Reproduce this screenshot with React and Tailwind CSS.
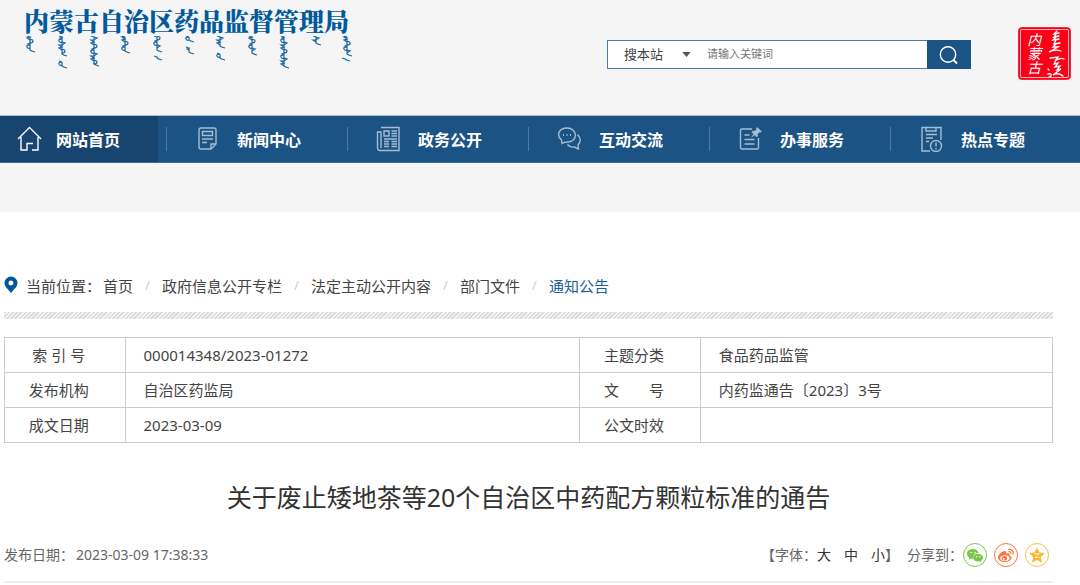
import React from "react";

const navItems = [
  { label: "新闻中心", icon: "news" },
  { label: "政务公开", icon: "paper" },
  { label: "互动交流", icon: "chat" },
  { label: "办事服务", icon: "service" },
  { label: "热点专题", icon: "topic" },
];

const crumbs = ["首页", "政府信息公开专栏", "法定主动公开内容", "部门文件"];

const iconPaths = {
  home: (
    <path d="M1 13 12.500 1.500 24 13M4 11v13h6v-6.500h6M15 24h6V11" />
  ),
  news: (
    <>
      <path d="M6 2h13q2 0 2 2v14l-5 5H6q-2 0-2-2V4q0-2 2-2Z" />
      <path d="M7.500 5.500h10v4h-10ZM7 13h11M7 16.500h5M16 23v-5h5" />
    </>
  ),
  paper: (
    <>
      <path d="M5 1.500h18v23H4q-2.500 0-2.500-3V6H5v16" />
      <path d="M8 5h5v5H8ZM15.500 5H21M15.500 7.500H21M15.500 10H21M8 13h13M8 15.500h5M15.500 15.500H21M8 18h5M15.500 18H21M8 20.500h5M15.500 20.500H21" />
    </>
  ),
  chat: (
    <>
      <path d="M5 17.500 4.500 14C-1 9 2 2 10 2c11 0 11 14 1 14-2 0-4 0-6 1.500ZM20.500 8.500c4 4 3 8 .5 10.500l.5 4-4-2c-3 .5-5.500-.5-7-2.500" />
      <path d="M6 9h1M9.500 9h1M13 9h1" strokeWidth="2" />
    </>
  ),
  service: (
    <>
      <path d="M14 3H4Q2.500 3 2.500 4.500v17Q2.500 23 4 23h15q1.500 0 1.500-1.500V12M6.500 9h5M6.500 13.500h10M6.500 18h10" />
      <path
        d="m19.500 1.500 4 4-1 .8-1-.3-2 2 .2 2-1 1-2-2-3 2 2-3-2-2 1-1 2 .2 2-2-.3-1Z"
        fill="currentColor"
        strokeWidth="0.500"
      />
    </>
  ),
  topic: (
    <>
      <path d="M11 25H3V1.500h19V14M7 2v3h10V2M7 8.500h11M7 12h7M7 15.500h3" />
      <circle cx="17" cy="20" r="5.500" />
      <path d="M17 16.500v4M17 22v1.500" strokeWidth="1.500" />
    </>
  ),
};

function NavIcon({ name, className }) {
  return (
    <svg
      viewBox="0 0 26 26"
      className={className}
      fill="none"
      stroke="currentColor"
      strokeWidth="1.400"
      aria-hidden="true"
    >
      {iconPaths[name]}
    </svg>
  );
}

// Vertical script below the site name: [x, top, bottom] for each word.
const strokes = [
  [6, 0, 16],
  [38, 0, 20],
  [38, 25, 32],
  [70, 0, 30],
  [101, 0, 17],
  [133, 0, 16],
  [133, 20, 24],
  [165, 0, 6],
  [165, 11, 18],
  [196, 0, 12],
  [196, 17, 24],
  [228, 0, 19],
  [260, 0, 32],
  [292, 0, 9],
  [323, 0, 20],
  [321, 22, 25],
];

const segments = [
  "l-3 1 3 2",
  "q3-1 3 1t-3 2",
  "l-2 1 2 1",
  "q-4 0-3 2t3 1",
  "l3 1-3 2",
  "l-3 0 3 2",
];
const segmentHeights = [3, 3, 2, 3, 3, 2];

function word(x, top, bottom) {
  let d = `M${x - 3} ${top}l3 1`;
  let y = top + 1;
  let i = (x + top) % segments.length;
  while (y < bottom - 4) {
    d += segments[i];
    y += segmentHeights[i];
    i = (i + 1) % segments.length;
  }
  return `${d}L${x} ${bottom - 2}q1 1 5 2M${x} ${top + 1}V${bottom - 2}`;
}

function ScriptLine() {
  return (
    <svg
      viewBox="0 0 332 34"
      className="h-[34px] w-[332px]"
      fill="none"
      stroke="#1c69a3"
      strokeWidth="1.200"
      aria-hidden="true"
    >
      {strokes.map(([x, top, bottom]) => (
        <path key={`${x}-${top}`} d={word(x, top, bottom)} />
      ))}
    </svg>
  );
}

function Seal() {
  return (
    <div className="flex h-[53px] w-[53px] items-center justify-around rounded-sm border border-[#fb2338] bg-[#fd0018] p-px text-white outline-1 -outline-offset-3 outline-[#ffb4bb]">
      <span className="pl-1 text-[14px] leading-none italic [writing-mode:vertical-rl]">
        内蒙古
      </span>
      <svg
        viewBox="0 0 22 50"
        className="h-[50px] w-[22px]"
        fill="none"
        stroke="currentColor"
        strokeWidth="1.300"
        strokeLinecap="round"
        aria-hidden="true"
      >
        <path d="M12 2 9 5l5-1M11 5l-2 3 5-1M11 8l-3 3 6-1M11 11l-2 4 6-1M11 15l-3 3 5 0-9 5q6-3 12-1M5 29l8-1-3 4q5-4 9-2M11 31l-2 4 4-1-3 4 5-1-3 4 4-1-8 6q5-3 10 1M3 40l1 1M3 45q4-1 3 2l-2 1" />
      </svg>
    </div>
  );
}

function SearchForm() {
  return (
    <form
      className="flex h-[29px] w-[364px] border border-[#4a7ca8] bg-white"
      onSubmit={(e) => e.preventDefault()}
    >
      <div className="relative w-[99px]">
        <select
          aria-label="搜索范围"
          className="h-full w-full appearance-none bg-transparent pl-4 text-[13px] text-[#444] outline-none"
        >
          <option>搜本站</option>
        </select>
        <svg
          viewBox="0 0 10 6"
          className="pointer-events-none absolute top-[11px] right-4 h-[5px] w-[9px] fill-[#555]"
          aria-hidden="true"
        >
          <path d="M0 0h10L5 6Z" />
        </svg>
      </div>
      <input
        type="text"
        aria-label="关键词"
        placeholder="请输入关键词"
        className="min-w-0 flex-1 bg-transparent text-[11px] outline-none placeholder:text-[#757575]"
      />
      <button
        type="submit"
        aria-label="搜索"
        className="-my-px -mr-px flex w-11 items-center justify-center bg-[#1b5384] text-white"
      >
        <svg
          viewBox="0 0 20 20"
          className="h-5 w-5"
          fill="none"
          stroke="currentColor"
          strokeWidth="1.400"
          aria-hidden="true"
        >
          <circle cx="9" cy="9.500" r="7.700" />
          <path d="m14.500 15 3.500 3.500" strokeWidth="1.800" />
        </svg>
      </button>
    </form>
  );
}

function Th({ children }) {
  return (
    <th
      scope="row"
      className="border border-[#ccc] pr-3 text-center font-normal whitespace-pre"
    >
      {children}
    </th>
  );
}

function Td({ children }) {
  return <td className="border border-[#ccc] pl-[18px]">{children}</td>;
}

function ShareLink({ label, className, children }) {
  return (
    <a
      href="#"
      aria-label={label}
      className={`flex h-6 w-6 items-center justify-center rounded-full border ${className}`}
    >
      <svg viewBox="0 0 16 16" className="h-4 w-4" aria-hidden="true">
        {children}
      </svg>
    </a>
  );
}

export default function App() {
  return (
    <div className="bg-white font-['Noto_Sans','Noto_Sans_CJK_SC',sans-serif] text-[#444]">
      <header className="bg-[#f5f5f5] pb-[49px]">
        <div className="flex h-[115px] items-start justify-between pr-[9px] pl-6">
          <a href="#" className="block pt-1 text-[#005a9c]">
            <h1 className="font-['Noto_Serif_CJK_SC','Noto_Sans_CJK_SC',serif] text-[25px] leading-8 font-black whitespace-nowrap">
              内蒙古自治区药品监督管理局
            </h1>
            <ScriptLine />
          </a>
          <div className="flex items-start gap-[47px] pt-[27px]">
            <div className="pt-[13px]">
              <SearchForm />
            </div>
            <Seal />
          </div>
        </div>
        <nav className="border-t border-b border-t-[#a9c0d3] border-b-[#3a6c98] bg-[#1b5384]">
          <ul className="flex h-[46px] items-center text-[16px] font-bold whitespace-nowrap text-white">
            <li className="h-full w-[166px]">
              <a
                href="#"
                className="flex h-full w-[158px] items-center bg-[#18456f] pl-[17px]"
              >
                <NavIcon name="home" className="mr-[13px] h-[26px] w-[26px]" />
                <span className="pt-0.5">网站首页</span>
              </a>
            </li>
            {navItems.map((item) => (
              <li
                key={item.label}
                className="h-6 w-[181px] border-l border-[#4f7ca3]"
              >
                <a href="#" className="flex h-full items-center pl-7">
                  <NavIcon
                    name={item.icon}
                    className="mr-4 h-[26px] w-[26px] text-[#a5bdd2]"
                  />
                  <span className="pt-0.5">{item.label}</span>
                </a>
              </li>
            ))}
          </ul>
        </nav>
      </header>

      <main className="pr-[27px] pl-1">
        <nav
          aria-label="当前位置"
          className="flex h-[100px] items-end pb-3 text-[15px] leading-7 whitespace-nowrap"
        >
          <svg
            viewBox="0 0 14 18"
            className="mr-2 mb-[6px] h-[18px] w-[14px]"
            aria-hidden="true"
          >
            <path
              fillRule="evenodd"
              fill="#00569b"
              d="M7 .5a6.500 6.500 0 0 1 6.500 6.500c0 4-4 6.500-6.500 10C4.500 13.500.5 11 .5 7A6.500 6.500 0 0 1 7 .5Zm0 4a2.500 2.500 0 1 0 0 5 2.500 2.500 0 0 0 0-5Z"
            />
          </svg>
          <span className="mr-0.5">当前位置：</span>
          <ol className="flex">
            {crumbs.map((c) => (
              <li key={c} className="flex">
                <a href="#">{c}</a>
                <span className="w-[29px] text-center text-xs leading-7 text-[#ccc]">
                  /
                </span>
              </li>
            ))}
            <li>
              <a href="#" className="text-[#1b5f9a]">
                通知公告
              </a>
            </li>
          </ol>
        </nav>

        <div className="h-[7px] bg-[repeating-linear-gradient(135deg,#d8d8d8_0_1px,#f6f6f6_2px_3px)]" />

        <table className="mt-[18px] w-full table-fixed border-collapse text-[15px]">
          <colgroup>
            <col className="w-[11.5%]" />
            <col className="w-[43.4%]" />
            <col className="w-[11.5%]" />
            <col />
          </colgroup>
          <tbody>
            <tr className="h-[35px]">
              <Th>索 引 号</Th>
              <Td>000014348/2023-01272</Td>
              <Th>主题分类</Th>
              <Td>食品药品监管</Td>
            </tr>
            <tr className="h-[35px]">
              <Th>发布机构</Th>
              <Td>自治区药监局</Td>
              <Th>文　　号</Th>
              <Td>内药监通告〔2023〕3号</Td>
            </tr>
            <tr className="h-[35px]">
              <Th>成文日期</Th>
              <Td>2023-03-09</Td>
              <Th>公文时效</Th>
              <Td />
            </tr>
          </tbody>
        </table>

        <h2 className="mt-9 text-center text-[25px] leading-9 text-[#333]">
          关于废止矮地茶等20个自治区中药配方颗粒标准的通告
        </h2>

        <div className="mt-7 flex items-center justify-between border-b-2 border-[#eee] pr-1 pb-[14px] text-sm leading-6 text-[#666]">
          <p className="flex gap-0.5">
            <span>发布日期：</span>
            <time>2023-03-09 17:38:33</time>
          </p>
          <div className="flex items-center">
            <span>【字体：</span>
            <span className="flex gap-[13px] text-[#333]">
              <button type="button">大</button>
              <button type="button">中</button>
              <button type="button">小</button>
            </span>
            <span className="mr-2">】</span>
            <span>分享到：</span>
            <div className="flex gap-[7px]">
              <ShareLink label="微信" className="border-[#7bc549]">
                <path
                  fill="#7bc549"
                  d="M6 2C2.500 2 0 4 0 6.800c0 1.600.9 2.900 2.200 3.800L1.600 12.500l2.300-1.100c.6.200 1.300.3 2 .3C5.500 8 8 6 11.700 6 11 3.500 8.700 2 6 2Zm5 4.800c-2.800 0-5 1.700-5 3.900s2.200 3.800 5 3.800c.6 0 1.200-.1 1.700-.2l1.800.9-.4-1.600c1.200-.8 1.900-1.800 1.900-2.900 0-2.200-2.200-3.900-5-3.900Z"
                />
                <g fill="#fff">
                  <circle cx="4" cy="5.500" r=".8" />
                  <circle cx="8" cy="5.500" r=".8" />
                  <circle cx="9.500" cy="9.700" r=".7" />
                  <circle cx="12.700" cy="9.700" r=".7" />
                </g>
              </ShareLink>
              <ShareLink label="微博" className="border-[#ff763b]">
                <path
                  fill="#ff763b"
                  fillRule="evenodd"
                  d="M6.500 4C3.500 4.500 0 8 0 10.500S3 15 6.800 15c4 0 6.700-2.300 6.700-4.300 0-1.300-1-2-2-2.300.6-2-.8-2.700-3.500-1.700C8.500 5 8 3.800 6.500 4Zm.3 4.300c2.800-.2 4.900 1 4.900 2.700s-2 3.100-4.700 3.200c-2.700.1-4.900-1.100-4.900-2.900s2-2.800 4.700-3Z"
                />
                <ellipse cx="6.500" cy="11.300" rx="2.700" ry="2.300" fill="#ff763b" />
                <circle cx="5.700" cy="11.800" r=".9" fill="#fff" />
                <path
                  d="M10 2.500c3.500-1 6 2 4.800 5M10.500 4.700c1.800-.4 2.800.8 2.200 2.300"
                  fill="none"
                  stroke="#ff763b"
                  strokeWidth="1.200"
                />
              </ShareLink>
              <ShareLink label="QQ空间" className="border-[#fdbe3d]">
                <path
                  fill="#fdb52c"
                  stroke="#fdb52c"
                  strokeLinejoin="round"
                  d="m8 1.500 2 4.400 5 .6-3.700 3.400 1 4.900L8 12.400l-4.300 2.400 1-4.900L1 6.500l5-.6Z"
                />
                <path
                  d="M5.500 6.800h4.800l-4.600 3.700h5"
                  fill="none"
                  stroke="#fff"
                  strokeWidth=".8"
                />
              </ShareLink>
            </div>
          </div>
        </div>
      </main>
    </div>
  );
}
